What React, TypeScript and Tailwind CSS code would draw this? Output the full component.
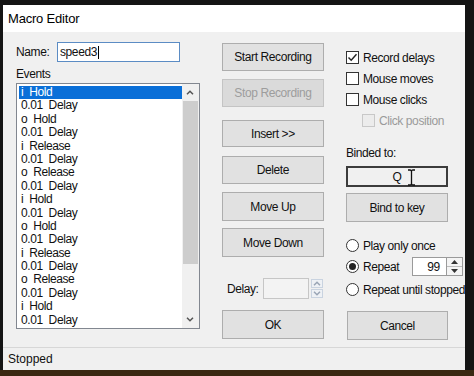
import React from 'react';

const events = [
  'i  Hold',
  '0.01  Delay',
  'o  Hold',
  '0.01  Delay',
  'i  Release',
  '0.01  Delay',
  'o  Release',
  '0.01  Delay',
  'i  Hold',
  '0.01  Delay',
  'o  Hold',
  '0.01  Delay',
  'i  Release',
  '0.01  Delay',
  'o  Release',
  '0.01  Delay',
  'i  Hold',
  '0.01  Delay',
];

function Button({ label, disabled, className }: { label: string; disabled?: boolean; className?: string }) {
  return (
    <div
      className={`flex items-center justify-center border ${
        disabled ? 'border-[#c4c4c4] bg-[#dadada] text-[#9d9d9d]' : 'border-[#adadad] bg-[#e1e1e1] text-[#111]'
      } ${className ?? ''}`}
    >
      {label}
    </div>
  );
}

function Check({ checked, disabled, label }: { checked?: boolean; disabled?: boolean; label: string }) {
  return (
    <div className="flex h-[13px] items-center gap-[4px] whitespace-nowrap">
      <div
        className={`flex h-[13px] w-[13px] items-center justify-center border ${
          disabled ? 'border-[#c8c8c8] bg-[#ececec]' : 'border-[#333] bg-white'
        }`}
      >
        {checked && (
          <svg width="11" height="11" viewBox="0 0 11 11">
            <polyline points="1.5,5.5 4.2,8.3 9.5,2.2" fill="none" stroke="#222" strokeWidth="1.4" />
          </svg>
        )}
      </div>
      <span className={disabled ? 'text-[#9a9a9a]' : ''}>{label}</span>
    </div>
  );
}

function Radio({ checked, label, children }: { checked?: boolean; label: string; children?: React.ReactNode }) {
  return (
    <div className="flex h-[13px] items-center gap-[4px] whitespace-nowrap">
      <div className="flex h-[13px] w-[13px] shrink-0 items-center justify-center rounded-full border border-[#333] bg-white">
        {checked && <div className="h-[7px] w-[7px] rounded-full bg-[#222]" />}
      </div>
      {children ? (
        <>
          <span className="w-[45px]">{label}</span>
          {children}
        </>
      ) : (
        <span>{label}</span>
      )}
    </div>
  );
}

function Chevron({ up, color = '#555' }: { up?: boolean; color?: string }) {
  return (
    <svg width="8" height="5" viewBox="0 0 8 5">
      <polyline
        points={up ? '1,4.2 4,1.2 7,4.2' : '1,0.8 4,3.8 7,0.8'}
        fill="none"
        stroke={color}
        strokeWidth="1.5"
      />
    </svg>
  );
}

export default function App() {
  return (
    <div className="flex h-[376px] w-[474px] flex-col overflow-hidden bg-[#141414] font-['Liberation_Sans',Arial,sans-serif] text-[12px] tracking-[-0.4px] text-[#111]">
      <div className="flex pl-[3px] pr-[9px] pt-[5px]">
        <div className="flex h-[365px] w-[462px] flex-col bg-[#f0f0f0]">
          {/* title bar */}
          <div className="flex h-[27px] items-center bg-white pl-[5px] text-[13px] tracking-[-0.2px] text-black">
            Macro Editor
          </div>

          {/* body */}
          <div className="flex h-[315px] pl-[13px]">
            {/* left column */}
            <div className="flex w-[184px] flex-col">
              <div className="mt-[10px] flex h-[20px] items-center">
                <span className="w-[41px]">Name:</span>
                <div className="flex h-[20px] w-[123px] items-center border border-[#5b8cc4] bg-white pl-[2px]">
                  speed3
                  <div className="ml-[1px] h-[13px] w-px bg-black" />
                </div>
              </div>
              <div className="mt-[5px] h-[14px] leading-[14px]">Events</div>
              <div className="mt-[2px] flex h-[246px] border border-[#828790] bg-white">
                <div className="flex flex-1 flex-col pl-[2px] pt-[2px]">
                  {events.map((e, i) => (
                    <div
                      key={i}
                      className={`h-[13.4px] whitespace-pre pl-[2px] leading-[13.4px] ${
                        i === 0 ? 'bg-[#0a6fd8] text-white' : ''
                      }`}
                    >
                      {e}
                    </div>
                  ))}
                </div>
                <div className="flex w-[17px] flex-col bg-[#f0f0f0]">
                  <div className="flex h-[17px] items-center justify-center">
                    <Chevron up />
                  </div>
                  <div className="mx-[1px] h-[163px] bg-[#cdcdcd]" />
                  <div className="flex-1" />
                  <div className="flex h-[17px] items-center justify-center">
                    <Chevron />
                  </div>
                </div>
              </div>
            </div>

            {/* middle column */}
            <div className="ml-[22px] flex w-[102px] flex-col">
              <Button label="Start Recording" className="mt-[11px] h-[28px]" />
              <Button label="Stop Recording" disabled className="mt-[8px] h-[28px]" />
              <Button label="Insert >>" className="mt-[13px] h-[27px]" />
              <Button label="Delete" className="mt-[9px] h-[28px]" />
              <Button label="Move Up" className="mt-[8px] h-[29px]" />
              <Button label="Move Down" className="mt-[7px] h-[29px]" />
              <div className="mt-[21px] flex h-[21px] items-center">
                <span className="ml-[5px] w-[36px]">Delay:</span>
                <div className="h-[21px] w-[46px] border border-[#c6c6c6] bg-[#f3f3f3]" />
                <div className="ml-[2px] flex h-[19px] w-[12px] flex-col gap-[1px]">
                  <div className="flex flex-1 items-center justify-center border border-[#c9d3e0] bg-[#eef1f5]">
                    <Chevron up color="#9aa5b5" />
                  </div>
                  <div className="flex flex-1 items-center justify-center border border-[#c9d3e0] bg-[#eef1f5]">
                    <Chevron color="#9aa5b5" />
                  </div>
                </div>
              </div>
              <Button label="OK" className="mt-[11px] h-[29px]" />
            </div>

            {/* right column */}
            <div className="ml-[22px] flex flex-1 flex-col">
              <div className="mt-[19px]">
                <Check checked label="Record delays" />
              </div>
              <div className="mt-[8px]">
                <Check label="Mouse moves" />
              </div>
              <div className="mt-[8px]">
                <Check label="Mouse clicks" />
              </div>
              <div className="ml-[16px] mt-[8px]">
                <Check disabled label="Click position" />
              </div>
              <div className="mt-[19px] h-[14px] leading-[14px]">Binded to:</div>
              <div className="relative mt-[6px] flex h-[21px] w-[102px] items-center justify-center border-2 border-[#3c3c3c] bg-[#f0f0f0]">
                Q
                <svg
                  className="absolute left-[59px] top-[1px]"
                  width="9"
                  height="17"
                  viewBox="0 0 9 17"
                >
                  <path
                    d="M1 1h2q1.5 0 1.5 1.5q0-1.5 1.5-1.5h2M4.5 2.5v12M1 16h2q1.5 0 1.5-1.5q0 1.5 1.5 1.5h2"
                    fill="none"
                    stroke="#111"
                    strokeWidth="1.3"
                  />
                </svg>
              </div>
              <Button label="Bind to key" className="mt-[6px] h-[29px] w-[102px]" />
              <div className="mt-[17px]">
                <Radio label="Play only once" />
              </div>
              <div className="mt-[8px]">
                <Radio checked label="Repeat">
                  <div className="flex h-[19px] shrink-0">
                    <div className="flex w-[35px] items-center justify-end border border-[#9a9a9a] bg-white pr-[6px]">
                      99
                    </div>
                    <div className="flex w-[16px] flex-col border border-l-0 border-[#9a9a9a] bg-[#f4f4f4]">
                      <div className="flex flex-1 items-center justify-center border-b border-[#bcbcbc]">
                        <svg width="7" height="4" viewBox="0 0 7 4">
                          <polygon points="0,4 3.5,0 7,4" fill="#333" />
                        </svg>
                      </div>
                      <div className="flex flex-1 items-center justify-center">
                        <svg width="7" height="4" viewBox="0 0 7 4">
                          <polygon points="0,0 3.5,4 7,0" fill="#333" />
                        </svg>
                      </div>
                    </div>
                  </div>
                </Radio>
              </div>
              <div className="mt-[10px]">
                <Radio label="Repeat until stopped" />
              </div>
              <Button label="Cancel" className="ml-[1px] mt-[15px] h-[29px] w-[101px]" />
            </div>
          </div>

          {/* status bar */}
          <div className="h-px bg-[#d7d7d7]" />
          <div className="flex h-[22px] items-center pl-[5px] tracking-normal">Stopped</div>
        </div>
      </div>
      <div className="flex-1 bg-[#3a2812]" />
    </div>
  );
}
